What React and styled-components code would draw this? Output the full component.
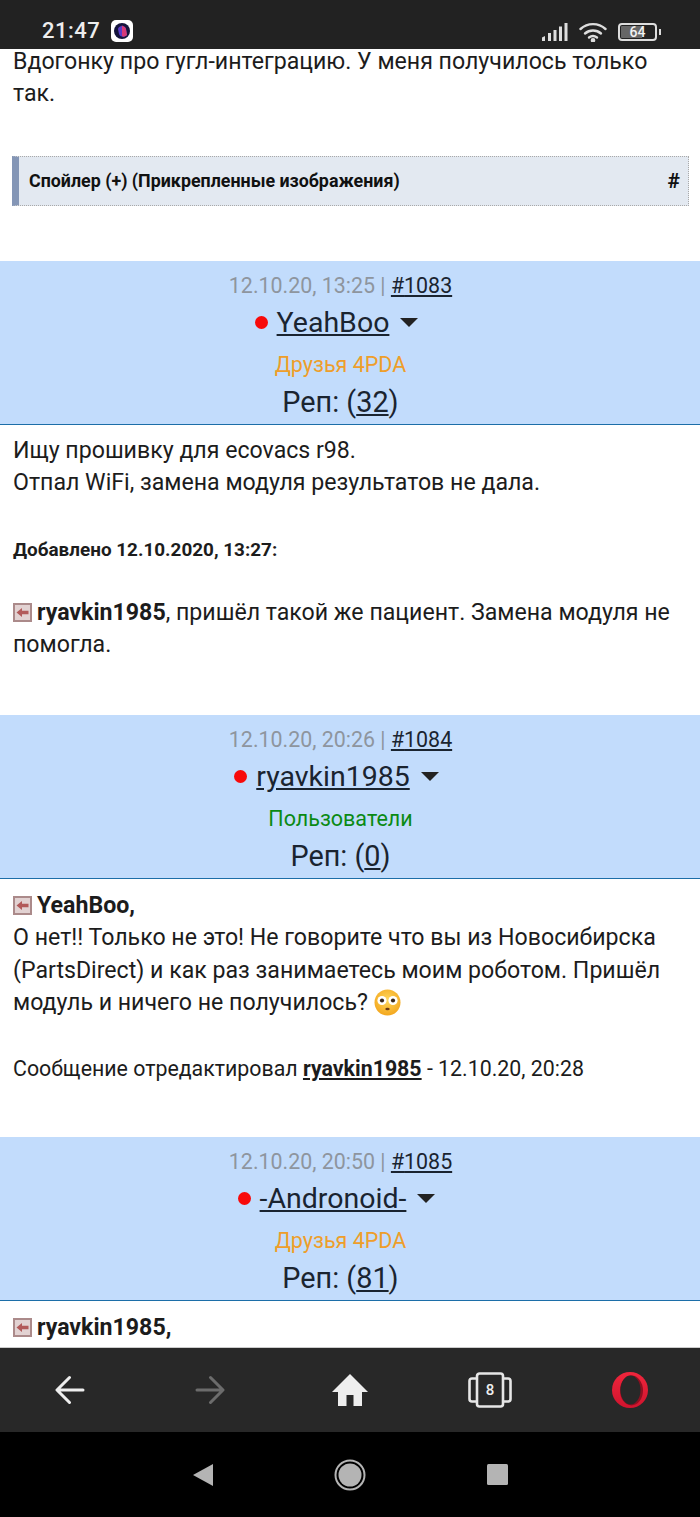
import React from 'react';
import styled, { createGlobalStyle } from 'styled-components';

const Global = createGlobalStyle`
  html, body {
    margin: 0;
    padding: 0;
    background: #fff;
  }
  * {
    box-sizing: border-box;
  }
`;

const Screen = styled.div`
  width: 700px;
  height: 1517px;
  display: flex;
  flex-direction: column;
  overflow: hidden;
  font-family: Roboto, "Liberation Sans", sans-serif;
  color: #1c1c1c;
`;

const StatusBar = styled.div`
  height: 49px;
  flex: none;
  background: #222;
  display: flex;
  align-items: flex-end;
  justify-content: space-between;
  padding: 0 43px 6px 42px;
  color: #eee;
`;

const StatusLeft = styled.div`
  display: flex;
  align-items: center;
  gap: 11px;
`;

const Clock = styled.span`
  font-size: 22px;
  font-weight: 500;
  letter-spacing: 0.5px;
  line-height: 24px;
`;

const StatusRight = styled.div`
  display: flex;
  align-items: center;
  gap: 11px;
  margin-bottom: 1px;
`;

const Battery = styled.div`
  position: relative;
  width: 39px;
  height: 18px;
  border: 2px solid #ddd;
  border-radius: 4px;
  display: flex;
  align-items: center;
  justify-content: center;
  font-size: 14px;
  font-weight: 500;
  color: #f2f2f2;
  background: linear-gradient(90deg, #666 0 64%, transparent 64%);
  background-clip: content-box;
  padding: 1px;

  &::after {
    content: '';
    position: absolute;
    right: -6px;
    top: 4px;
    width: 2px;
    height: 6px;
    background: #ddd;
  }
`;

const Content = styled.div`
  flex: 1;
  min-height: 0;
  background: #fff;
`;

const Body = styled.div`
  padding: ${p => p.$top || 0}px 13px 0;
  height: ${p => (p.$height ? `${p.$height}px` : 'auto')};
  font-size: 23.15px;
  line-height: 32.4px;
`;

const Line = styled.div`
  white-space: nowrap;
`;

// first post is scrolled so its text sits right under the status bar
const TightLine = styled(Line)`
  line-height: 24px;
  margin-bottom: 8px;
`;

const Added = styled.div`
  font-size: 18.9px;
  font-weight: 700;
  line-height: 24px;
  margin: 38px 0 35px;
`;

const Spoiler = styled.div`
  margin: 50px 11px 55px 12px;
  height: 50px;
  display: flex;
  align-items: center;
  justify-content: space-between;
  padding: 0 8px 1px 10px;
  background: #e3e9f1;
  border: 1px dotted #a9a9a9;
  border-left: 7px solid #8496b6;
  font-size: 17.85px;
  font-weight: 700;
  color: #111;
`;

const Hash = styled.span`
  font-size: 21px;
`;

const PostHeader = styled.div`
  height: 164px;
  background: #c2dcfc;
  border-bottom: 1px solid #1c6ea8;
  display: flex;
  flex-direction: column;
  align-items: center;
  padding: 12px 19px 0 0;
`;

const DateRow = styled.div`
  font-size: 21.4px;
  line-height: 26px;
  color: #8e959e;
`;

const Link = styled.span`
  color: #1a2430;
  text-decoration: underline;
`;

const NameRow = styled.div`
  display: flex;
  align-items: center;
  height: 42px;
  margin: 2px 8px 0 0;
  font-size: 28.5px;
  color: #1a2430;
`;

const Dot = styled.span`
  width: 13px;
  height: 13px;
  border-radius: 50%;
  background: #f80a0a;
  margin-right: 9px;
`;

const Caret = styled.span`
  width: 0;
  height: 0;
  margin-left: 11px;
  border-left: 9px solid transparent;
  border-right: 9px solid transparent;
  border-top: 9px solid #222;
`;

const Group = styled.div`
  margin-top: 9px;
  font-size: 21.5px;
  line-height: 26px;
  color: ${p => p.$color};
`;

const Rep = styled.div`
  margin-top: 7px;
  font-size: 28.8px;
  line-height: 34px;
  color: #1a2430;
`;

const Bold = styled.b`
  font-weight: 700;
`;

const BoldLink = styled.b`
  font-weight: 700;
  text-decoration: underline;
`;

const Small = styled.div`
  font-size: 21.35px;
  line-height: 32px;
  margin-top: 33px;
  white-space: nowrap;
`;

const Toolbar = styled.div`
  height: 85px;
  flex: none;
  background: #282828;
  border-top: 1px solid #ccc;
  display: grid;
  grid-template-columns: repeat(5, 140px);
  align-items: center;
  justify-items: center;
`;

const NavBar = styled.div`
  height: 85px;
  flex: none;
  background: #000;
  display: flex;
  align-items: center;
  justify-content: center;
`;

const NavSlot = styled.div`
  width: 147px;
  display: flex;
  justify-content: center;
`;

const Tabs = styled.div`
  position: relative;
  width: 44px;
  height: 36px;
  display: flex;
  align-items: center;
  justify-content: center;
`;

const TabCount = styled.span`
  font-size: 15px;
  font-weight: 500;
  color: #eee;
`;

const TabsIcon = styled.svg`
  position: absolute;
  inset: 0;
`;

const InlineIcon = styled.svg`
  vertical-align: ${p => p.$align}px;
  margin-right: ${p => p.$right || 0}px;
`;

const ReplyIcon = () => (
  <InlineIcon width="19" height="19" viewBox="0 0 19 19" $align={-2} $right={5}>
    <rect x="1" y="1" width="17" height="17" fill="#e2d2d2" stroke="#ab8a8a" strokeWidth="2" />
    <path d="M3.5 9.5 L9 5 V7.8 H15.5 V11.2 H9 V14 Z" fill="#b25a5a" />
  </InlineIcon>
);

const FlushedEmoji = () => (
  <InlineIcon width="27" height="27" viewBox="0 0 27 27" $align={-6}>
    <defs>
      <radialGradient id="face" cx="50%" cy="40%" r="60%">
        <stop offset="0%" stopColor="#ffd75c" />
        <stop offset="100%" stopColor="#f3a71e" />
      </radialGradient>
    </defs>
    <circle cx="13.5" cy="13.5" r="13" fill="url(#face)" />
    <circle cx="8" cy="11.5" r="4.6" fill="#fff" />
    <circle cx="19" cy="11.5" r="4.6" fill="#fff" />
    <circle cx="8" cy="11.5" r="2.1" fill="#3a2a1c" />
    <circle cx="19" cy="11.5" r="2.1" fill="#3a2a1c" />
    <ellipse cx="13.5" cy="20" rx="2.2" ry="1.3" fill="#6b3a12" />
  </InlineIcon>
);

function Header({ date, num, name, group, color, rep }) {
  return (
    <PostHeader>
      <DateRow>
        {date} | <Link>#{num}</Link>
      </DateRow>
      <NameRow>
        <Dot />
        <Link>{name}</Link>
        <Caret />
      </NameRow>
      <Group $color={color}>{group}</Group>
      <Rep>
        Реп: (<Link>{rep}</Link>)
      </Rep>
    </PostHeader>
  );
}

export default function App() {
  return (
    <Screen>
      <Global />
      <StatusBar>
        <StatusLeft>
          <Clock>21:47</Clock>
          <svg width="22" height="22" viewBox="0 0 22 22">
            <rect width="22" height="22" rx="5" fill="#fff" />
            <circle cx="11" cy="11" r="8" fill="#14143c" />
            <path d="M7 9 C8 6 9 7 11 5.5 C13 7 14 6 15 9 L16 15 C13 18 9 17 8 14 Z" fill="#5a3cc8" />
            <path d="M11 5.5 C13 7 14 6 15 9 L16 15 C14 17 12 17 11 16 Z" fill="#d83a78" />
          </svg>
        </StatusLeft>
        <StatusRight>
          <svg width="26" height="20" viewBox="0 0 26 20" fill="#ddd">
            <path d="M0 15.5 L3 14 V19 H0 Z" />
            <rect x="6" y="11" width="3" height="8" />
            <rect x="11.5" y="8" width="3" height="11" />
            <rect x="17" y="4.5" width="3" height="14.5" />
            <rect x="22.5" y="1" width="3" height="18" />
          </svg>
          <svg width="28" height="20" viewBox="0 0 28 20" fill="none" stroke="#ddd" strokeWidth="2.4" strokeLinecap="round">
            <path d="M1.5 7 C8.5 0.5 19.5 0.5 26.5 7" />
            <path d="M6 11.5 C10.5 7.5 17.5 7.5 22 11.5" />
            <path d="M10 15.5 C12.5 13.5 15.5 13.5 18 15.5" />
            <circle cx="14" cy="18.3" r="1.1" fill="#ddd" />
          </svg>
          <Battery>64</Battery>
        </StatusRight>
      </StatusBar>

      <Content>
        <Body $top={1}>
          <TightLine>Вдогонку про гугл-интеграцию. У меня получилось только</TightLine>
          <TightLine>так.</TightLine>
        </Body>
        <Spoiler>
          <span>Спойлер (+) (Прикрепленные изображения)</span>
          <Hash>#</Hash>
        </Spoiler>

        <Header date="12.10.20, 13:25" num="1083" name="YeahBoo" group="Друзья 4PDA" color="#ee9e2a" rep="32" />
        <Body $top={10} $height={290}>
          <Line>Ищу прошивку для ecovacs r98.</Line>
          <Line>Отпал WiFi, замена модуля результатов не дала.</Line>
          <Added>Добавлено 12.10.2020, 13:27:</Added>
          <Line>
            <ReplyIcon />
            <Bold>ryavkin1985</Bold>, пришёл такой же пациент. Замена модуля не
          </Line>
          <Line>помогла.</Line>
        </Body>

        <Header date="12.10.20, 20:26" num="1084" name="ryavkin1985" group="Пользователи" color="#0a8a14" rep="0" />
        <Body $top={11} $height={258}>
          <Line>
            <ReplyIcon />
            <Bold>YeahBoo,</Bold>
          </Line>
          <Line>О нет!! Только не это! Не говорите что вы из Новосибирска</Line>
          <Line>(PartsDirect) и как раз занимаетесь моим роботом. Пришёл</Line>
          <Line>
            модуль и ничего не получилось? <FlushedEmoji />
          </Line>
          <Small>
            Сообщение отредактировал <BoldLink>ryavkin1985</BoldLink> - 12.10.20, 20:28
          </Small>
        </Body>

        <Header date="12.10.20, 20:50" num="1085" name="-Andronoid-" group="Друзья 4PDA" color="#ee9e2a" rep="81" />
        <Body $top={11}>
          <Line>
            <ReplyIcon />
            <Bold>ryavkin1985,</Bold>
          </Line>
        </Body>
      </Content>

      <Toolbar>
        <svg width="30" height="30" viewBox="0 0 30 30" fill="none" stroke="#eee" strokeWidth="3" strokeLinecap="round" strokeLinejoin="round">
          <path d="M28 15 H3 M14.5 2.5 L2 15 L14.5 27.5" />
        </svg>
        <svg width="30" height="30" viewBox="0 0 30 30" fill="none" stroke="#6c6c6c" strokeWidth="3" strokeLinecap="round" strokeLinejoin="round">
          <path d="M2 15 H27 M15.5 2.5 L28 15 L15.5 27.5" />
        </svg>
        <svg width="36" height="32" viewBox="0 0 36 32" fill="#eee">
          <path d="M18 0 L36 18 H30 V32 H21.5 V21 H14.5 V32 H6 V18 H0 Z" />
        </svg>
        <Tabs>
          <TabsIcon width="44" height="36" viewBox="0 0 44 36" fill="none" stroke="#e6e6e6" strokeWidth="2.6" strokeLinejoin="round">
            <rect x="9" y="1.5" width="26" height="33" rx="2.5" />
            <path d="M9 6.5 H4 Q1.5 6.5 1.5 9 V27 Q1.5 29.5 4 29.5 H9" />
            <path d="M35 6.5 H40 Q42.5 6.5 42.5 9 V27 Q42.5 29.5 40 29.5 H35" />
          </TabsIcon>
          <TabCount>8</TabCount>
        </Tabs>
        <svg width="36" height="36" viewBox="0 0 36 36">
          <defs>
            <linearGradient id="operaRed" x1="0" y1="0" x2="0" y2="1">
              <stop offset="0%" stopColor="#f0263c" />
              <stop offset="100%" stopColor="#d0142e" />
            </linearGradient>
          </defs>
          <circle cx="18" cy="18" r="18" fill="url(#operaRed)" />
          <ellipse cx="19.5" cy="18.5" rx="11.5" ry="15" fill="#8e1020" />
          <ellipse cx="18.5" cy="18" rx="10" ry="14.5" fill="#282828" />
        </svg>
      </Toolbar>

      <NavBar>
        <NavSlot>
          <svg width="22" height="24" viewBox="0 0 22 24" fill="#b4b4b4">
            <path d="M21 1 V23 L1 12 Z" />
          </svg>
        </NavSlot>
        <NavSlot>
          <svg width="32" height="32" viewBox="0 0 32 32">
            <circle cx="16" cy="16" r="14.5" fill="none" stroke="#b4b4b4" strokeWidth="2" />
            <circle cx="16" cy="16" r="11.5" fill="#b4b4b4" />
          </svg>
        </NavSlot>
        <NavSlot>
          <svg width="21" height="21" viewBox="0 0 21 21">
            <rect width="21" height="21" rx="1.5" fill="#b4b4b4" />
          </svg>
        </NavSlot>
      </NavBar>
    </Screen>
  );
}
